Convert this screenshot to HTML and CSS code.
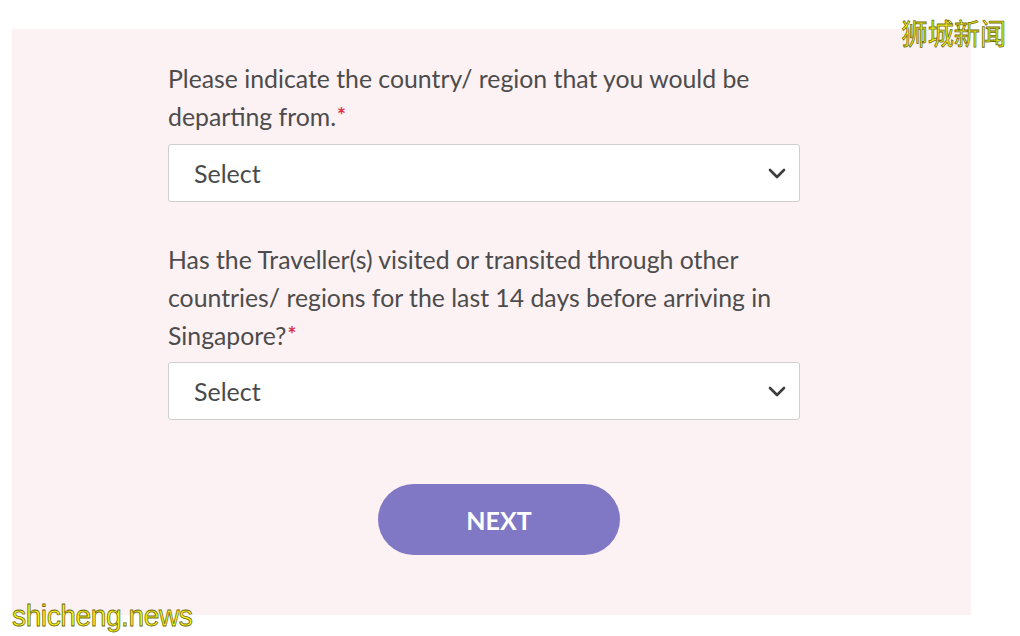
FILE: index.html
```html
<!DOCTYPE html>
<html>
<head>
<meta charset="utf-8">
<link rel="stylesheet" href="styles.css">
</head>
<body>
<div class="page">
  <div class="panel">
    <div class="field">
      <label class="label">Please indicate the country/ region that you would be departing from.<span class="req">*</span></label>
      <div class="select">
        <span class="select-text">Select</span>
        <svg class="chev" width="18" height="11" viewBox="0 0 18 11"><path d="M2 2 L9 9 L16 2" fill="none" stroke="#3c3c3c" stroke-width="2.6" stroke-linecap="round" stroke-linejoin="round"/></svg>
      </div>
    </div>
    <div class="field field-2">
      <label class="label">Has the Traveller(s) visited or transited through other countries/ regions for the last 14 days before arriving in Singapore?<span class="req">*</span></label>
      <div class="select select-2">
        <span class="select-text">Select</span>
        <svg class="chev" width="18" height="11" viewBox="0 0 18 11"><path d="M2 2 L9 9 L16 2" fill="none" stroke="#3c3c3c" stroke-width="2.6" stroke-linecap="round" stroke-linejoin="round"/></svg>
      </div>
    </div>
    <div class="actions">
      <button class="next">NEXT</button>
    </div>
  </div>
  <div class="wm wm-top">狮城新闻</div>
  <div class="wm wm-bottom">shicheng.news</div>
</div>
</body>
</html>
```

FILE: styles.css
```css
html, body {
  margin: 0;
  padding: 0;
  background: #ffffff;
}
.page {
  position: relative;
  width: 1020px;
  height: 636px;
  padding-top: 29px;
  box-sizing: border-box;
  font-family: Lato, "Noto Sans", sans-serif;
}
.panel {
  margin-left: 12px;
  width: 959px;
  height: 586px;
  background: #fcf1f3;
  box-sizing: border-box;
  padding: 31px 0 0 156px;
}
.field {
  width: 632px;
}
.field-2 {
  margin-top: 39px;
}
.label {
  display: block;
  font-size: 24.8px;
  line-height: 38px;
  color: #4c4c4c;
}
.req {
  color: #d9304a;
  font-size: 21px;
  font-weight: 700;
  line-height: 0;
  position: relative;
  top: -3px;
  margin-left: 1px;
}
.select {
  margin-top: 8px;
  height: 58px;
  box-sizing: border-box;
  border: 1px solid #cfcfcf;
  border-radius: 3px;
  background: #ffffff;
  display: flex;
  align-items: center;
  padding: 0 13px 0 25px;
  justify-content: space-between;
}
.select-2 {
  margin-top: 7px;
}
.select-text {
  font-size: 25px;
  color: #4a4a4a;
}
.chev {
  display: block;
}
.actions {
  margin-top: 64px;
  padding-left: 210px;
}
.next {
  width: 242px;
  height: 71px;
  border: none;
  border-radius: 36px;
  background: #8178c5;
  color: #ffffff;
  font-family: Lato, "Noto Sans", sans-serif;
  font-weight: 700;
  font-size: 25px;
  cursor: pointer;
}
.wm {
  position: absolute;
  color: #f6f21a;
  -webkit-text-stroke: 0.8px #6f6a10;
}
.wm-top {
  top: 14px;
  right: 14px;
  font-family: "Noto Sans CJK SC", sans-serif;
  font-size: 29px;
  line-height: 36px;
  transform: scaleX(0.9);
  transform-origin: right center;
}
.wm-bottom {
  left: 12px;
  bottom: 3px;
  font-family: "Liberation Sans", sans-serif;
  font-size: 30px;
  line-height: 34px;
  letter-spacing: -0.5px;
  transform: scaleX(0.94);
  transform-origin: left center;
}
```
